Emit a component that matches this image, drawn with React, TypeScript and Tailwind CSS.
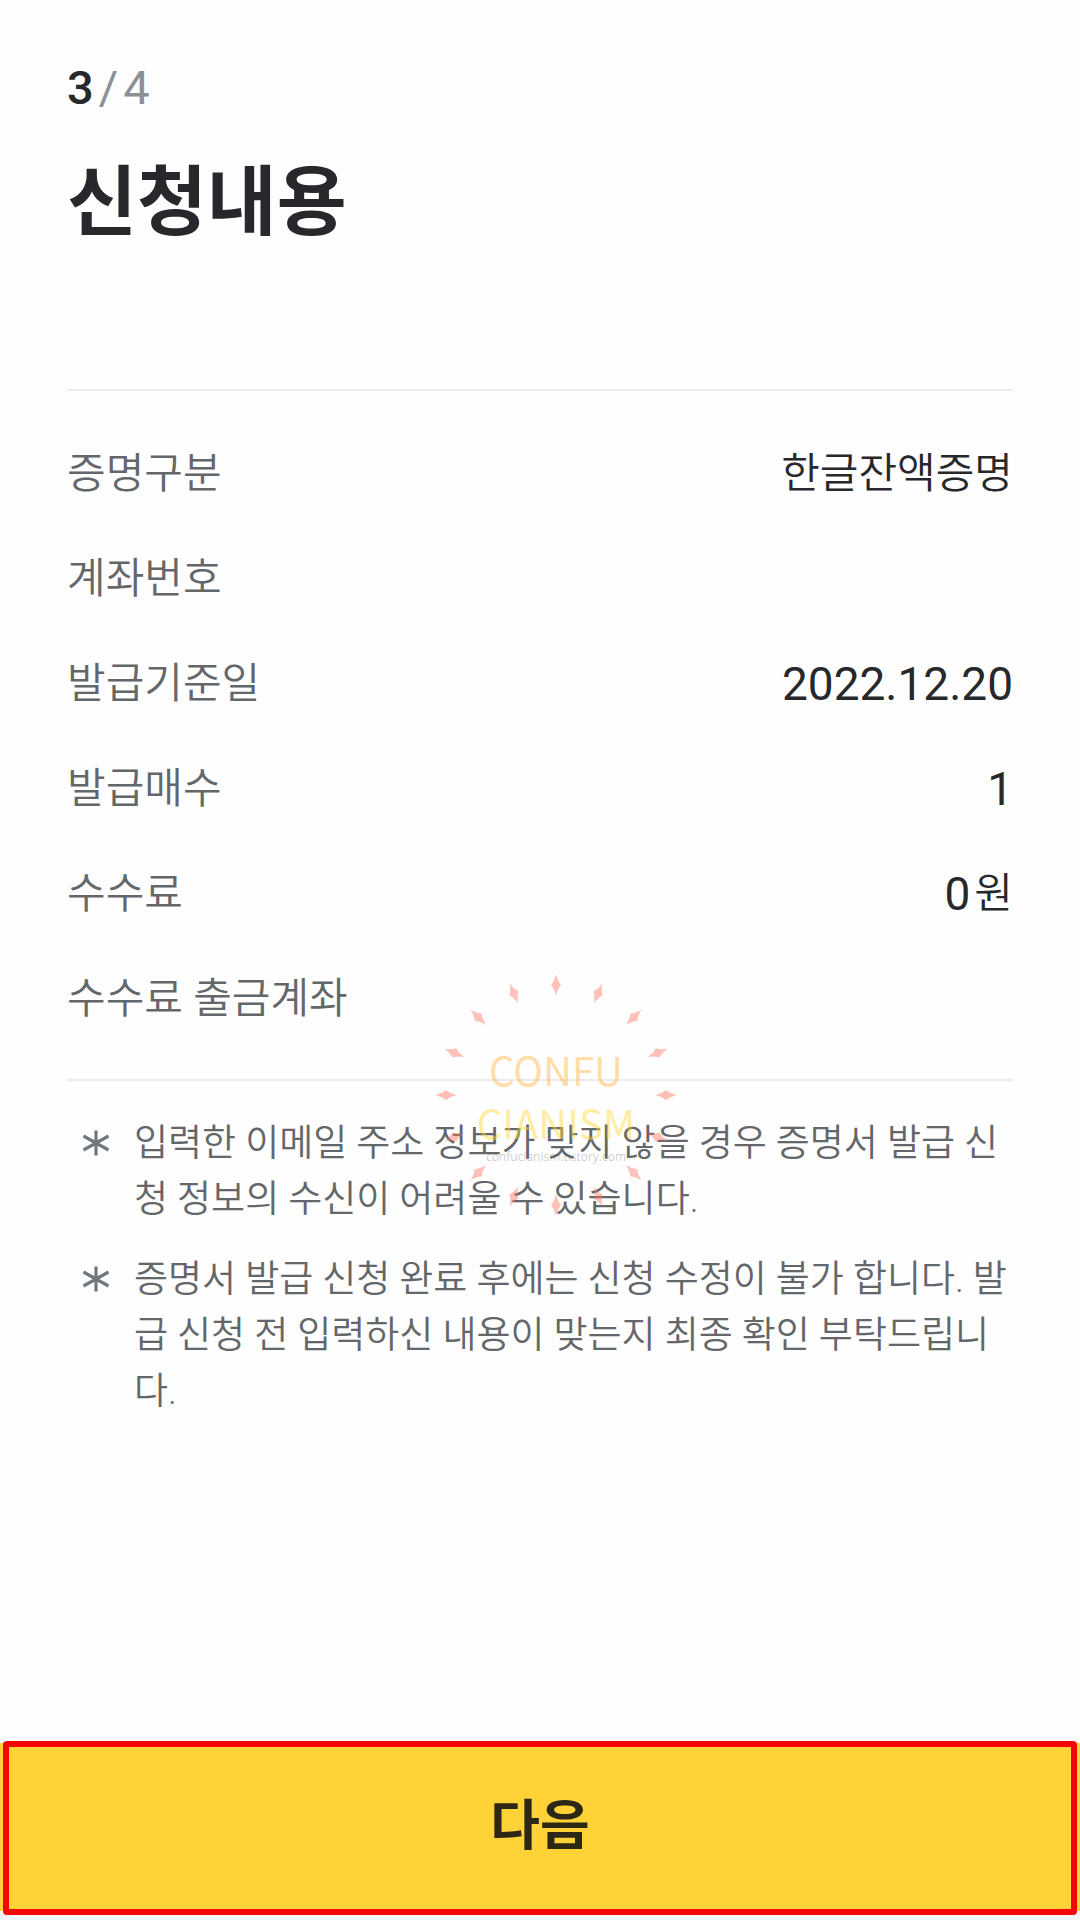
const rows = [
  { label: "증명구분", value: "한글잔액증명", numeric: false },
  { label: "계좌번호", value: "", numeric: false },
  { label: "발급기준일", value: "2022.12.20", numeric: true },
  { label: "발급매수", value: "1", numeric: true },
  { label: "수수료", value: "0", unit: "원", numeric: true },
  { label: "수수료 출금계좌", value: "", numeric: false },
];

const notes = [
  "입력한 이메일 주소 정보가 맞지 않을 경우 증명서 발급 신청 정보의 수신이 어려울 수 있습니다.",
  "증명서 발급 신청 완료 후에는 신청 수정이 불가 합니다. 발급 신청 전 입력하신 내용이 맞는지 최종 확인 부탁드립니다.",
];

const rays = Array.from({ length: 16 }, (_, i) => i * 22.5);

function Asterisk() {
  return (
    <svg
      className="mt-[13px] ml-[15px] h-7 w-7 shrink-0"
      viewBox="-14 -14 28 28"
      fill="none"
      stroke="#72787c"
      strokeWidth="3.200"
      aria-hidden="true"
    >
      <path d="M0-12.5V12.5M-12.5-7L12.5 7M-12.5 7L12.5-7" />
    </svg>
  );
}

function Watermark() {
  return (
    <div className="pointer-events-none absolute top-full left-1/2 mt-4 ml-4 flex h-60 w-60 -translate-x-1/2 -translate-y-1/2 flex-col items-center justify-center">
      <svg className="absolute inset-0 h-full w-full" viewBox="-120 -120 240 240" aria-hidden="true">
        {rays.map((angle) => (
          <path
            key={angle}
            transform={`rotate(${angle})`}
            d="M0-121Q1.500-114 5-110Q1.500-106 0-99Q-1.500-106-5-110Q-1.500-114 0-121Z"
            fill="#ff7662"
            fillOpacity="0.45"
          />
        ))}
      </svg>
      <span className="mt-4 font-['Noto_Sans_CJK_KR',sans-serif] text-[40px] leading-[53px] font-normal text-[#ffb435]/45">
        CONFU
      </span>
      <span className="font-['Noto_Sans_CJK_KR',sans-serif] text-[40px] leading-[53px] font-normal text-[#ffd733]/45">
        CIANISM
      </span>
      <span className="mt-0.5 font-['Open_Sans',sans-serif] text-[12px] leading-3 font-normal text-[#555555]/30">
        confucianism.tistory.com
      </span>
    </div>
  );
}

export default function App() {
  return (
    <div className="flex min-h-screen flex-col bg-[#fefefe] font-['Roboto','Noto_Sans_CJK_KR',sans-serif] text-[#27282b]">
      <main className="flex-1 px-[67px] pt-[60px]">
        <p className="flex items-center gap-[5px] text-[47px] leading-[56px]">
          <span className="font-medium">3</span>
          <span className="text-[#8b9097]">/</span>
          <span className="text-[#8b9097]">4</span>
        </p>
        <h1 className="mt-[35px] text-[76px] leading-[104px] font-bold">신청내용</h1>

        <section className="relative mt-[134px] border-y-2 border-[#ebebeb] pt-[30px] pb-[28px]">
          <dl>
            {rows.map((row) => (
              <div key={row.label} className="flex h-[105px] items-center justify-between">
                <dt className="text-[42px] leading-[60px] font-[350] text-[#64676a]">{row.label}</dt>
                <dd className="flex items-center gap-1 text-[42px] leading-[60px] font-[350]">
                  {row.numeric ? (
                    <span className="text-[46px] leading-[56px] font-normal">{row.value}</span>
                  ) : (
                    row.value
                  )}
                  {row.unit && <span>{row.unit}</span>}
                </dd>
              </div>
            ))}
          </dl>
          <Watermark />
        </section>

        <ul className="mt-[35px] flex flex-col gap-6">
          {notes.map((note) => (
            <li key={note} className="flex gap-6">
              <Asterisk />
              <p className="flex-1 text-[37px] leading-[56px] font-[350] break-all text-[#64676a]">{note}</p>
            </li>
          ))}
        </ul>
      </main>

      <footer className="relative bg-[#f6f4f4] pb-[9px]">
        <button type="button" className="block h-[168px] w-full bg-[#ffd237] pb-0.5 text-[54px] font-bold text-[#2c2815]">
          다음
        </button>
        <div className="pointer-events-none absolute inset-x-[3px] -top-[2px] bottom-[5px] rounded-[4px] border-[6px] border-[#f60600]" />
      </footer>
    </div>
  );
}
